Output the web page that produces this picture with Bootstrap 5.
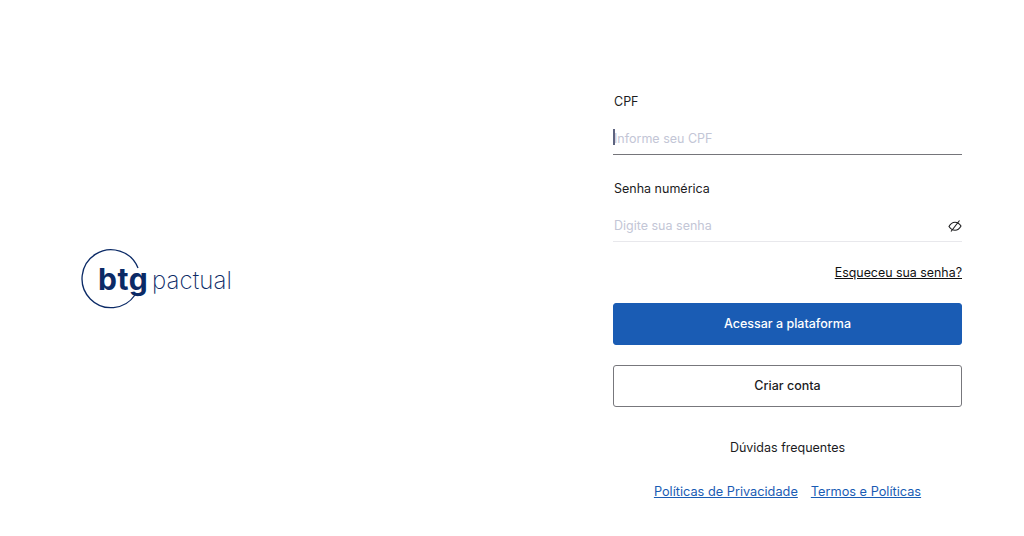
<!DOCTYPE html>
<html lang="pt-BR">
<head>
  <meta charset="UTF-8" />
  <meta name="viewport" content="width=device-width, initial-scale=1" />
  <title>BTG Pactual</title>
  <link href="https://cdn.jsdelivr.net/npm/bootstrap@5.3.3/dist/css/bootstrap.min.css" rel="stylesheet" />
  <style>
    body {
      background: #fff;
      font-family: Inter, "Liberation Sans", sans-serif;
      color: #1c1c1e;
    }
    .login-page { height: 536px; }
    .logo-side { width: 613px; padding-left: 82px; padding-top: 22px; }
    .logo-box { width: 152px; height: 60px; }
    .logo-box svg { display: block; overflow: visible; }
    .logo-btg { font-family: Inter, sans-serif; font-weight: 700; font-size: 30px; letter-spacing: .6px; fill: #0b2a66; }
    .logo-pactual { font-family: Inter, sans-serif; font-weight: 200; font-size: 24px; letter-spacing: .1px; fill: #0b2a66; }
    .form-side { width: 349px; padding-top: 93px; }
    .field-label { display: block; font-size: 12.5px; line-height: 18px; margin-bottom: 0; padding-left: 1px; color: #1c1c1e; }
    .label-gap { margin-top: 25px; }
    .field-wrap { height: 37px; margin-top: 7px; border-bottom: 1px solid #75757a; }
    .field-wrap.is-idle { border-bottom-color: #e8e8ec; }
    .field-input {
      border: 0; outline: 0; background: transparent; padding: 4px 0 0 1px;
      width: 100%; height: 36px; font-size: 12.5px; color: #1c1c1e;
      font-family: inherit;
    }
    .field-input::placeholder { color: #c3c6d6; opacity: 1; }
    .caret-line { width: 2px; height: 16px; background: #5d6480; left: 0; top: 11px; }
    .eye-btn { right: 0; top: 14px; width: 14px; height: 14px; line-height: 0; }
    .forgot { font-size: 12.4px; line-height: 18px; color: #111; margin-top: 22px; }
    .btn-enter, .btn-create {
      font-size: 12.5px; font-weight: 500; height: 42px; border-radius: 3px;
      display: flex; align-items: center; justify-content: center; padding: 0;
    }
    .btn-enter { background: #1a5cb4; border: 1px solid #1a5cb4; color: #fff; margin-top: 21px; }
    .btn-enter:hover { background: #174f9c; color: #fff; border-color: #174f9c; }
    .btn-create { background: #fff; border: 1px solid #77777c; color: #1c1c1e; margin-top: 20px; }
    .help-link { font-size: 12.5px; line-height: 18px; color: #1c1c1e; margin-top: 32px; }
    .foot-links { margin-top: 26px; gap: 13px; font-size: 12.75px; line-height: 18px; }
    .foot-links a { color: #1a5cb4; }
  </style>
</head>
<body>
  <main class="login-page d-flex">
    <div class="logo-side d-flex align-items-center">
      <div class="logo-box">
        <svg width="152" height="60" viewBox="0 0 152 60" aria-label="btg pactual">
          <path d="M56 19 A29 29 0 1 0 53 46" fill="none" stroke="#0b2a66" stroke-width="1.3" />
          <text class="logo-btg" x="16" y="41">btg</text>
          <text class="logo-pactual" x="70" y="40">pactual</text>
        </svg>
      </div>
    </div>
    <form class="form-side">
      <label class="field-label" for="cpf">CPF</label>
      <div class="field-wrap position-relative">
        <input class="field-input" id="cpf" type="text" placeholder="Informe seu CPF" />
        <span class="caret-line position-absolute"></span>
      </div>

      <label class="field-label label-gap" for="senha">Senha numérica</label>
      <div class="field-wrap is-idle position-relative">
        <input class="field-input" id="senha" type="password" placeholder="Digite sua senha" />
        <span class="eye-btn position-absolute">
          <svg width="14" height="14" viewBox="0 0 14 14" fill="none" stroke="#1c1c1e" stroke-width="1.1">
            <path d="M1 7.5 C2.6 4.6 4.8 3.2 7 3.2 S11.4 4.6 13 7 C11.4 9.9 9.2 11.3 7 11.3 S2.6 9.9 1 7.5 Z" />
            <path d="M3 12.5 L11.5 1.5" />
          </svg>
        </span>
      </div>

      <div class="text-end forgot"><a href="#" class="text-reset">Esqueceu sua senha?</a></div>

      <button type="button" class="btn btn-enter w-100">Acessar a plataforma</button>
      <button type="button" class="btn btn-create w-100">Criar conta</button>

      <div class="text-center help-link">Dúvidas frequentes</div>
      <div class="foot-links d-flex justify-content-center">
        <a href="#">Políticas de Privacidade</a>
        <a href="#">Termos e Políticas</a>
      </div>
    </form>
  </main>
  <script src="https://cdn.jsdelivr.net/npm/bootstrap@5.3.3/dist/js/bootstrap.bundle.min.js"></script>
</body>
</html>
